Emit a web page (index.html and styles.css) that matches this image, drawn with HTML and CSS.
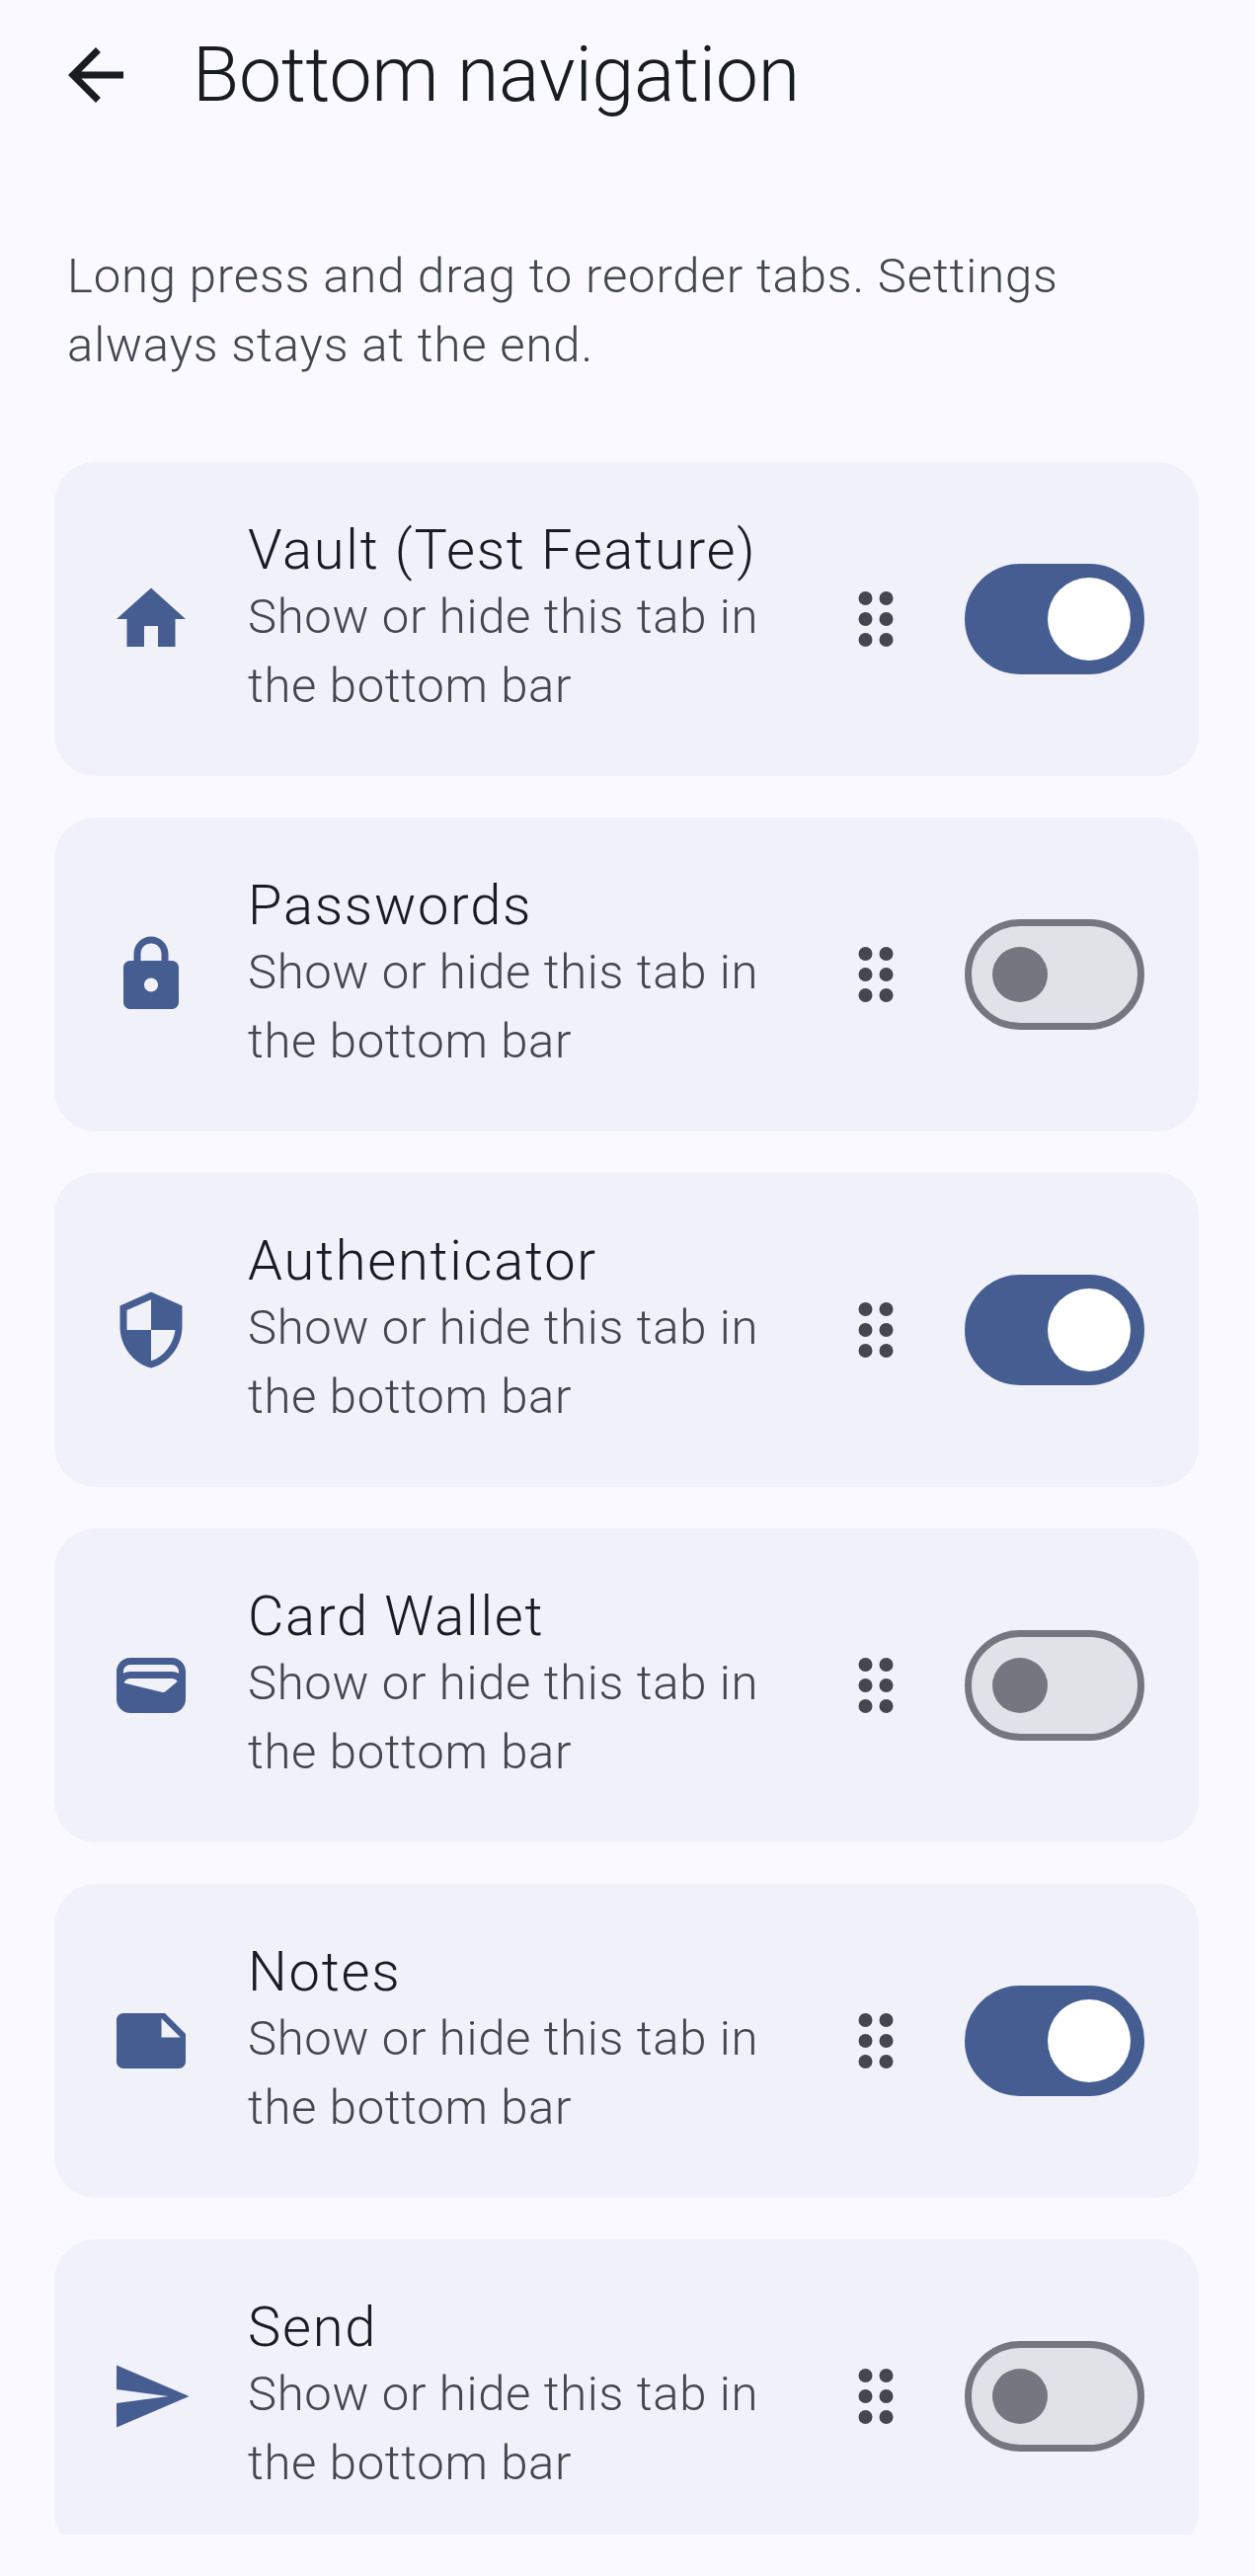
FILE: index.html
```html
<!DOCTYPE html>
<html lang="en">
<head>
  <meta charset="UTF-8">
  <title>Bottom navigation</title>
  <link rel="stylesheet" href="styles.css">
</head>
<body>

  <header class="top-bar">
    <svg class="back-icon" viewBox="0 0 24 24"><path d="M20 11H7.83l5.59-5.59L12 4l-8 8 8 8 1.41-1.41L7.83 13H20v-2z"/></svg>
    <h1>Bottom navigation</h1>
  </header>

  <p class="intro">Long press and drag to reorder tabs. Settings always stays at the end.</p>

  <div class="tab-list">

    <div class="tab-card">
      <svg class="tab-icon" viewBox="0 0 24 24"><path d="M10 20v-6h4v6h5v-8h3L12 3 2 12h3v8z"/></svg>
      <div class="tab-text">
        <div class="tab-title">Vault (Test Feature)</div>
        <div class="tab-desc">Show or hide this tab in the bottom bar</div>
      </div>
      <svg class="drag-icon" viewBox="0 0 24 24"><path d="M11 18a2 2 0 1 1-4 0 2 2 0 0 1 4 0zm0-6a2 2 0 1 1-4 0 2 2 0 0 1 4 0zm0-6a2 2 0 1 1-4 0 2 2 0 0 1 4 0zm6 12a2 2 0 1 1-4 0 2 2 0 0 1 4 0zm0-6a2 2 0 1 1-4 0 2 2 0 0 1 4 0zm0-6a2 2 0 1 1-4 0 2 2 0 0 1 4 0z"/></svg>
      <div class="switch on"><span class="thumb"></span></div>
    </div>

    <div class="tab-card">
      <svg class="tab-icon" viewBox="0 0 24 24"><path d="M18 8h-1V6c0-2.76-2.24-5-5-5S7 3.24 7 6v2H6c-1.1 0-2 .9-2 2v10c0 1.1.9 2 2 2h12c1.1 0 2-.9 2-2V10c0-1.1-.9-2-2-2zm-6 9c-1.1 0-2-.9-2-2s.9-2 2-2 2 .9 2 2-.9 2-2 2zM15 8H9V6c0-1.66 1.34-3 3-3s3 1.34 3 3v2z"/></svg>
      <div class="tab-text">
        <div class="tab-title">Passwords</div>
        <div class="tab-desc">Show or hide this tab in the bottom bar</div>
      </div>
      <svg class="drag-icon" viewBox="0 0 24 24"><path d="M11 18a2 2 0 1 1-4 0 2 2 0 0 1 4 0zm0-6a2 2 0 1 1-4 0 2 2 0 0 1 4 0zm0-6a2 2 0 1 1-4 0 2 2 0 0 1 4 0zm6 12a2 2 0 1 1-4 0 2 2 0 0 1 4 0zm0-6a2 2 0 1 1-4 0 2 2 0 0 1 4 0zm0-6a2 2 0 1 1-4 0 2 2 0 0 1 4 0z"/></svg>
      <div class="switch"><span class="thumb"></span></div>
    </div>

    <div class="tab-card">
      <svg class="tab-icon" viewBox="0 0 24 24"><path d="M12 1L3 5v6c0 5.55 3.84 10.74 9 12 5.16-1.26 9-6.45 9-12V5l-9-4zm0 10.99h7c-.53 4.12-3.28 7.79-7 8.94V12H5V6.3l7-3.11v8.8z"/></svg>
      <div class="tab-text">
        <div class="tab-title">Authenticator</div>
        <div class="tab-desc">Show or hide this tab in the bottom bar</div>
      </div>
      <svg class="drag-icon" viewBox="0 0 24 24"><path d="M11 18a2 2 0 1 1-4 0 2 2 0 0 1 4 0zm0-6a2 2 0 1 1-4 0 2 2 0 0 1 4 0zm0-6a2 2 0 1 1-4 0 2 2 0 0 1 4 0zm6 12a2 2 0 1 1-4 0 2 2 0 0 1 4 0zm0-6a2 2 0 1 1-4 0 2 2 0 0 1 4 0zm0-6a2 2 0 1 1-4 0 2 2 0 0 1 4 0z"/></svg>
      <div class="switch on"><span class="thumb"></span></div>
    </div>

    <div class="tab-card">
      <svg class="tab-icon" viewBox="0 0 24 24"><path d="M18 4H6C3.79 4 2 5.79 2 8v8c0 2.21 1.79 4 4 4h12c2.21 0 4-1.79 4-4V8c0-2.21-1.79-4-4-4zm-1.86 9.77c-.24.2-.57.28-.88.2L4.15 11.25C4.45 10.52 5.16 10 6 10h12c.67 0 1.26.34 1.63.84l-3.49 2.93zM6 6h12c1.1 0 2 .9 2 2v.55C19.41 8.21 18.73 8 18 8H6c-.73 0-1.41.21-2 .55V8c0-1.1.9-2 2-2z"/></svg>
      <div class="tab-text">
        <div class="tab-title">Card Wallet</div>
        <div class="tab-desc">Show or hide this tab in the bottom bar</div>
      </div>
      <svg class="drag-icon" viewBox="0 0 24 24"><path d="M11 18a2 2 0 1 1-4 0 2 2 0 0 1 4 0zm0-6a2 2 0 1 1-4 0 2 2 0 0 1 4 0zm0-6a2 2 0 1 1-4 0 2 2 0 0 1 4 0zm6 12a2 2 0 1 1-4 0 2 2 0 0 1 4 0zm0-6a2 2 0 1 1-4 0 2 2 0 0 1 4 0zm0-6a2 2 0 1 1-4 0 2 2 0 0 1 4 0z"/></svg>
      <div class="switch"><span class="thumb"></span></div>
    </div>

    <div class="tab-card">
      <svg class="tab-icon" viewBox="0 0 24 24"><path d="M22 10l-6-6H4c-1.1 0-2 .9-2 2v12.01c0 1.1.9 1.99 2 1.99l16-.01c1.1 0 2-.89 2-1.99v-8zm-7-4.5l5.5 5.5H15V5.5z"/></svg>
      <div class="tab-text">
        <div class="tab-title">Notes</div>
        <div class="tab-desc">Show or hide this tab in the bottom bar</div>
      </div>
      <svg class="drag-icon" viewBox="0 0 24 24"><path d="M11 18a2 2 0 1 1-4 0 2 2 0 0 1 4 0zm0-6a2 2 0 1 1-4 0 2 2 0 0 1 4 0zm0-6a2 2 0 1 1-4 0 2 2 0 0 1 4 0zm6 12a2 2 0 1 1-4 0 2 2 0 0 1 4 0zm0-6a2 2 0 1 1-4 0 2 2 0 0 1 4 0zm0-6a2 2 0 1 1-4 0 2 2 0 0 1 4 0z"/></svg>
      <div class="switch on"><span class="thumb"></span></div>
    </div>

    <div class="tab-card">
      <svg class="tab-icon" viewBox="0 0 24 24"><path d="M2.01 21L23 12 2.01 3 2 10l15 2-15 2z"/></svg>
      <div class="tab-text">
        <div class="tab-title">Send</div>
        <div class="tab-desc">Show or hide this tab in the bottom bar</div>
      </div>
      <svg class="drag-icon" viewBox="0 0 24 24"><path d="M11 18a2 2 0 1 1-4 0 2 2 0 0 1 4 0zm0-6a2 2 0 1 1-4 0 2 2 0 0 1 4 0zm0-6a2 2 0 1 1-4 0 2 2 0 0 1 4 0zm6 12a2 2 0 1 1-4 0 2 2 0 0 1 4 0zm0-6a2 2 0 1 1-4 0 2 2 0 0 1 4 0zm0-6a2 2 0 1 1-4 0 2 2 0 0 1 4 0z"/></svg>
      <div class="switch"><span class="thumb"></span></div>
    </div>

  </div>

</body>
</html>
```

FILE: styles.css
```css
body {
  margin: 0;
  background-color: #f9f9ff;
  font-family: Roboto, "Noto Sans", sans-serif;
  font-weight: 300;
  color: #191c20;
}

.top-bar {
  display: flex;
  align-items: center;
  height: 84px;
  padding: 34px 0 0 55px;
}

.back-icon {
  width: 84px;
  height: 84px;
  fill: #191c20;
}

h1 {
  margin: 0 0 0 56px;
  font-size: 77px;
  font-weight: 300;
  line-height: 84px;
  letter-spacing: -0.2px;
}

.intro {
  width: 1080px;
  margin: 127px 0 0 68px;
  font-size: 49px;
  line-height: 70px;
  letter-spacing: 0.875px;
  color: #44474e;
}

.tab-list {
  display: flex;
  flex-direction: column;
  gap: 42px;
  height: 2099px;
  margin: 83px 57px 0 55px;
  overflow: hidden;
}

.tab-card {
  display: flex;
  align-items: center;
  flex-shrink: 0;
  height: 318px;
  padding: 0 55px 0 56px;
  border-radius: 42px;
  background-color: #f1f1f9;
}

.tab-icon {
  flex-shrink: 0;
  width: 84px;
  height: 84px;
  margin-right: 56px;
  fill: #465d91;
}

.tab-text {
  flex: 1;
}

.tab-title {
  font-size: 56px;
  line-height: 66px;
  letter-spacing: 1.75px;
}

.tab-desc {
  font-size: 49px;
  line-height: 70px;
  letter-spacing: 0.7px;
  color: #44474e;
}

.drag-icon {
  flex-shrink: 0;
  width: 84px;
  height: 84px;
  margin: 0 48px 0 14px;
  fill: #44474e;
}

.switch {
  display: flex;
  align-items: center;
  flex-shrink: 0;
  box-sizing: border-box;
  width: 182px;
  height: 112px;
  padding-left: 21px;
  border: 7px solid #74777f;
  border-radius: 56px;
  background-color: #e1e2e8;
}

.thumb {
  width: 56px;
  height: 56px;
  border-radius: 50%;
  background-color: #74777f;
}

.switch.on {
  justify-content: flex-end;
  padding: 0 7px 0 0;
  border-color: #465d91;
  background-color: #465d91;
}

.switch.on .thumb {
  width: 84px;
  height: 84px;
  background-color: #fff;
}
```
